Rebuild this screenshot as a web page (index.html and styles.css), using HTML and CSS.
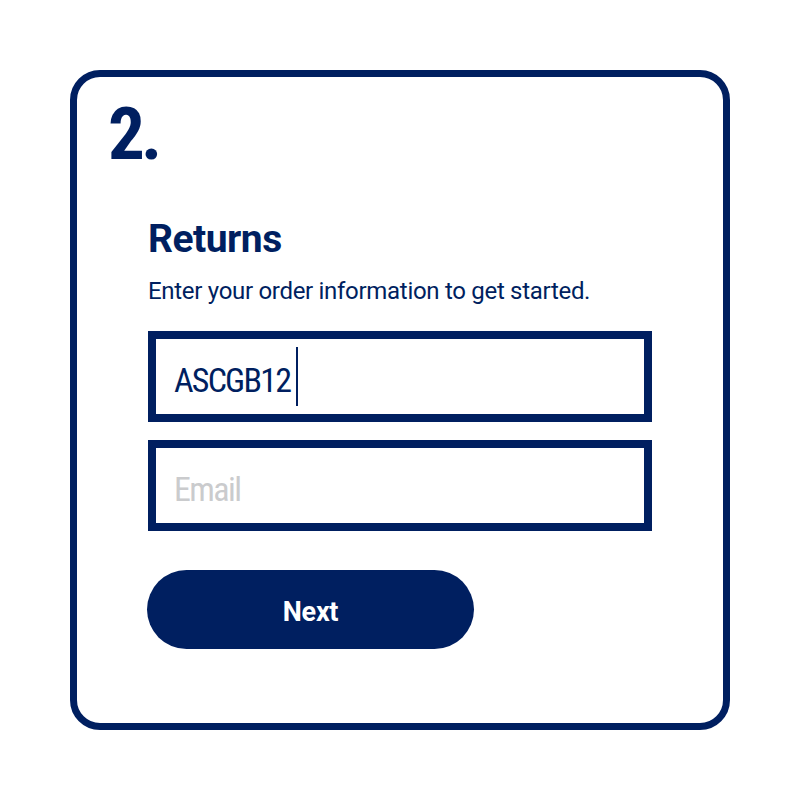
FILE: index.html
```html
<!DOCTYPE html>
<html lang="en">
<head>
<meta charset="utf-8">
<title>Returns</title>
<link rel="stylesheet" href="styles.css">
</head>
<body>
<div class="card">
  <div class="step">2.</div>
  <div class="form">
    <h1 class="title">Returns</h1>
    <p class="subtitle">Enter your order information to get started.</p>
    <div class="field"><span class="value">ASCGB12</span><span class="caret"></span></div>
    <div class="field field-gap"><span class="placeholder">Email</span></div>
    <button class="next">Next</button>
  </div>
</div>
</body>
</html>
```
FILE: styles.css
```css
html, body {
  margin: 0;
  padding: 0;
  background: #ffffff;
}
body {
  width: 800px;
  height: 800px;
  padding: 70px;
  box-sizing: border-box;
  font-family: Roboto, "Liberation Sans", sans-serif;
  color: #001f60;
}
.card {
  width: 660px;
  height: 660px;
  box-sizing: border-box;
  border: 7px solid #001f60;
  border-radius: 30px;
  padding: 21px 0 0 31px;
}
.step {
  font-family: "Roboto Condensed", Roboto, sans-serif;
  font-size: 73px;
  font-weight: 700;
  line-height: 72px;
  height: 72px;
  letter-spacing: -4px;
}
.form {
  margin-top: 50px;
  margin-left: 40px;
  width: 504px;
  display: flex;
  flex-direction: column;
  align-items: flex-start;
}
.title {
  margin: 0;
  font-size: 39px;
  font-weight: 700;
  line-height: 39px;
  letter-spacing: -0.5px;
}
.subtitle {
  margin: 20px 0 0 0;
  font-size: 24px;
  line-height: 24px;
  font-weight: 400;
  letter-spacing: -0.3px;
}
.field {
  margin-top: 28px;
  width: 504px;
  height: 91px;
  box-sizing: border-box;
  border: 8px solid #001f60;
  padding: 0 0 0 18px;
  display: flex;
  align-items: center;
  font-family: "Roboto Condensed", Roboto, sans-serif;
  font-size: 34px;
}
.field-gap {
  margin-top: 18px;
}
.value {
  color: #001f60;
  letter-spacing: -1.8px;
  position: relative;
  top: 3px;
}
.caret {
  width: 2px;
  height: 59px;
  background: #001f60;
  margin-left: 6px;
}
.placeholder {
  color: #cacbcd;
  letter-spacing: -1.6px;
  position: relative;
  top: 3px;
}
.next {
  margin-top: 39px;
  margin-left: -1px;
  width: 327px;
  height: 79px;
  border: none;
  border-radius: 40px;
  background: #001f60;
  color: #ffffff;
  font-family: Roboto, "Liberation Sans", sans-serif;
  font-size: 27px;
  font-weight: 700;
  padding: 4px 0 0 0;
  letter-spacing: -0.3px;
}
```
